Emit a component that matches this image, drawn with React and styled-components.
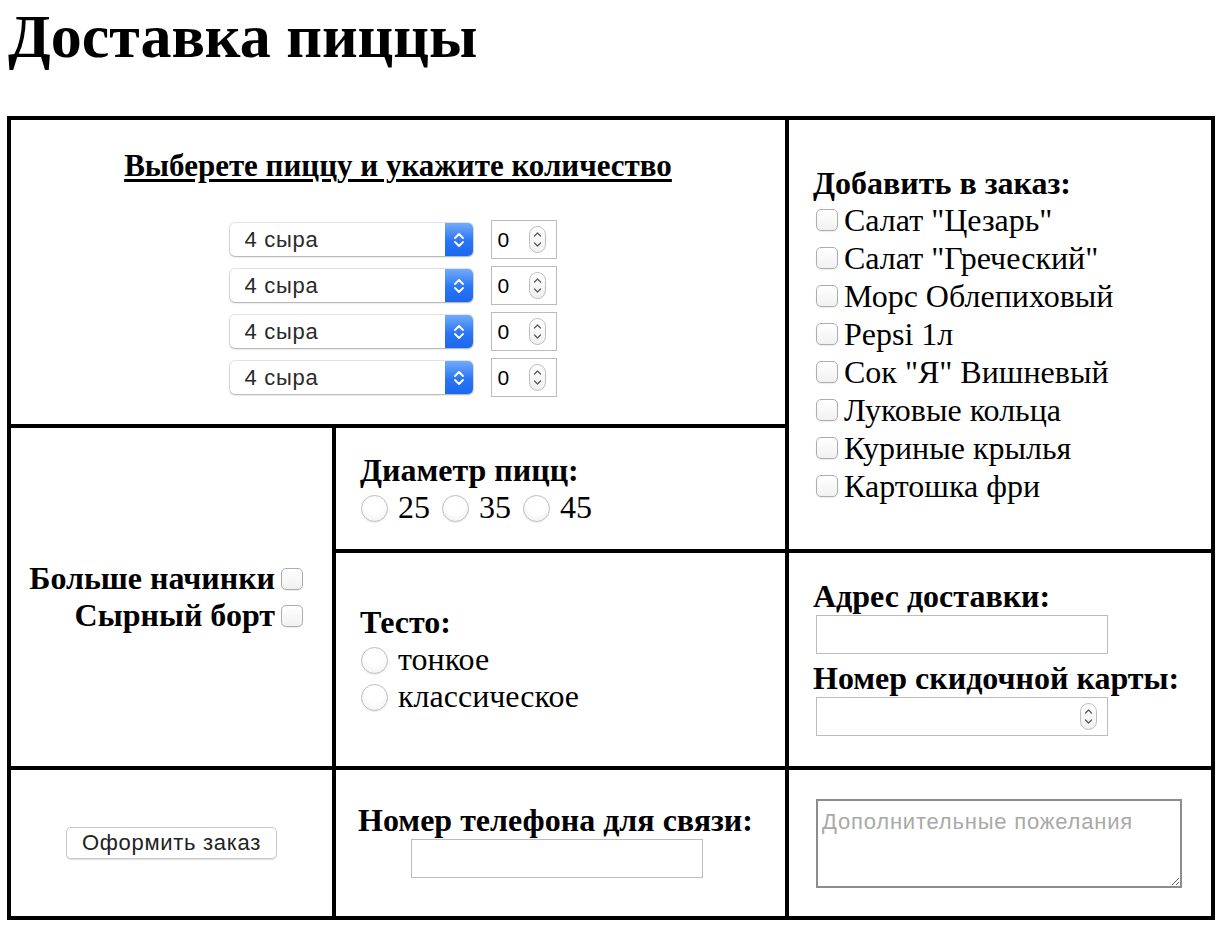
import React from 'react'
import styled, { createGlobalStyle } from 'styled-components'

const GlobalStyle = createGlobalStyle`
  body {
    margin: 0;
    background: #ffffff;
    color: #000000;
    font-family: "Liberation Serif", "Times New Roman", serif;
    font-size: 32px;
  }
`

const Page = styled.div`
  padding: 0 7px;
`

const Title = styled.h1`
  margin: 0 0 43px 1px;
  font-size: 62px;
  font-weight: bold;
  line-height: 73px;
`

const OrderGrid = styled.form`
  display: grid;
  grid-template-columns: 321px 449px 422px;
  grid-template-rows: 304px 121px 213px 146px;
  grid-template-areas:
    'pick pick extras'
    'more size extras'
    'more dough address'
    'submit phone notes';
  gap: 4px;
  padding: 4px;
  width: max-content;
  background: #000000;
`

const Cell = styled.div`
  grid-area: ${({ $area }) => $area};
  display: flex;
  flex-direction: column;
  justify-content: center;
  align-items: ${({ $align }) =>
    $align === 'center' ? 'center' : $align === 'right' ? 'flex-end' : 'flex-start'};
  padding: ${({ $pad }) => $pad || '0 24px'};
  text-align: ${({ $align }) => $align || 'left'};
  background: #ffffff;
`

const Heading = styled.div`
  font-weight: bold;
  line-height: ${({ $lh }) => $lh || '37px'};
  white-space: nowrap;
`

const PickTitle = styled.div`
  font-size: 31px;
  font-weight: bold;
  text-decoration: underline;
  text-underline-offset: 3px;
  line-height: 37px;
  margin-bottom: 36px;
`

const PizzaRows = styled.div`
  display: flex;
  flex-direction: column;
  gap: 7px;
  margin-right: 10px;
`

const PizzaRow = styled.div`
  display: flex;
  align-items: center;
  gap: 18px;
`

const SelectBox = styled.div`
  display: flex;
  width: 243px;
  height: 33px;
  border-radius: 5px;
  overflow: hidden;
  background: #ffffff;
  box-shadow: 0 0 0 1px rgba(0, 0, 0, 0.1), 0 1px 2px rgba(0, 0, 0, 0.25);
`

const Select = styled.select`
  appearance: none;
  flex: 1;
  min-width: 0;
  border: 0;
  outline: none;
  background: transparent;
  padding: 0 0 0 15px;
  font-family: "Liberation Sans", Arial, sans-serif;
  font-size: 22px;
  letter-spacing: 0.7px;
  color: #2a2a2a;
`

const SelectArrows = styled.span`
  display: flex;
  align-items: center;
  justify-content: center;
  width: 28px;
  background: linear-gradient(#72abf9, #2a75f4 55%, #1b68f0);
`

const NumberBox = styled.div`
  display: flex;
  align-items: center;
  box-sizing: border-box;
  width: ${({ $wide }) => ($wide ? '292px' : '66px')};
  height: 39px;
  margin: ${({ $wide }) => ($wide ? '0 0 6px 3px' : '0')};
  padding: 0 10px 0 6px;
  border: 1px solid #bcbcbc;
  background: #ffffff;
`

const NumberInput = styled.input`
  flex: 1;
  min-width: 0;
  border: 0;
  outline: none;
  padding: 0;
  font-family: "Liberation Sans", Arial, sans-serif;
  font-size: 21px;
  color: #000000;
  background: transparent;
  -moz-appearance: textfield;
  &::-webkit-inner-spin-button,
  &::-webkit-outer-spin-button {
    -webkit-appearance: none;
    margin: 0;
  }
`

const TextInput = styled.input`
  box-sizing: border-box;
  width: 292px;
  height: 39px;
  margin: 0 0 6px 3px;
  border: 1px solid #bcbcbc;
  outline: none;
  font-family: "Liberation Sans", Arial, sans-serif;
  font-size: 21px;
`

const Option = styled.label`
  display: flex;
  align-items: center;
  line-height: ${({ $lh }) => $lh || '37px'};
  font-weight: ${({ $bold }) => ($bold ? 'bold' : 'normal')};
  white-space: nowrap;
`

const RadioLine = styled.div`
  display: flex;
  align-items: center;
  line-height: 37px;
`

const Check = styled.input.attrs({ type: 'checkbox' })`
  appearance: none;
  flex: none;
  width: 22px;
  height: 22px;
  margin: ${({ $after }) => ($after ? '0 5px 0 6px' : '0 6px 0 3px')};
  border: 1px solid #adadad;
  border-radius: 5px;
  background: linear-gradient(#ffffff, #f1f1f1);
  box-shadow: 0 1px 1px rgba(0, 0, 0, 0.08);
`

const Radio = styled.input.attrs({ type: 'radio' })`
  appearance: none;
  flex: none;
  width: 27px;
  height: 27px;
  margin: 2px 10px 0 1px;
  border: 1px solid #bdbdbd;
  border-radius: 50%;
  background: radial-gradient(circle at 50% 35%, #ffffff 40%, #eeeeee);
  box-shadow: 0 1px 1px rgba(0, 0, 0, 0.08);
`

const RadioText = styled.span`
  margin-right: 11px;
`

const SubmitButton = styled.button`
  height: 32px;
  padding: 0 15px;
  border: 1px solid #c8c8c8;
  border-radius: 5px;
  background: #ffffff;
  box-shadow: 0 1px 1px rgba(0, 0, 0, 0.12);
  font-family: "Liberation Sans", Arial, sans-serif;
  font-size: 22px;
  letter-spacing: 0.7px;
  color: #222222;
`

const Notes = styled.textarea`
  box-sizing: border-box;
  width: 366px;
  height: 89px;
  margin-left: 3px;
  padding: 8px 4px;
  border: 2px solid #8d8d8d;
  outline: none;
  resize: both;
  font-family: "Liberation Sans", Arial, sans-serif;
  font-size: 22px;
  letter-spacing: 0.8px;
  &::placeholder {
    color: #a9a9a9;
  }
`

function Chevrons() {
  return (
    <svg width="12" height="20" viewBox="0 0 12 20">
      <path d="M2 8 L6 4 L10 8 M2 12 L6 16 L10 12" fill="none" stroke="#ffffff" strokeWidth="1.8" strokeLinecap="round" strokeLinejoin="round" />
    </svg>
  )
}

function Spinner() {
  return (
    <svg width="17" height="27" viewBox="0 0 17 27">
      <defs>
        <linearGradient id="spin" x1="0" y1="0" x2="0" y2="1">
          <stop offset="0" stopColor="#ffffff" />
          <stop offset="1" stopColor="#f0f0f0" />
        </linearGradient>
      </defs>
      <rect x="0.5" y="0.5" width="16" height="26" rx="8" fill="url(#spin)" stroke="#bdbdbd" />
      <path d="M5.5 10 L8.5 7 L11.5 10 M5.5 17 L8.5 20 L11.5 17" fill="none" stroke="#555555" strokeWidth="1.2" strokeLinecap="round" strokeLinejoin="round" />
    </svg>
  )
}

const extras = [
  'Салат "Цезарь"',
  'Салат "Греческий"',
  'Морс Облепиховый',
  'Pepsi 1л',
  'Сок "Я" Вишневый',
  'Луковые кольца',
  'Куриные крылья',
  'Картошка фри',
]

export default function App() {
  return (
    <Page>
      <GlobalStyle />
      <Title>Доставка пиццы</Title>
      <OrderGrid onSubmit={(e) => e.preventDefault()}>
        <Cell $area="pick" $align="center">
          <PickTitle>Выберете пиццу и укажите количество</PickTitle>
          <PizzaRows>
            {[0, 1, 2, 3].map((index) => (
              <PizzaRow key={`pizza-${index}`}>
                <SelectBox>
                  <Select defaultValue="4cheese">
                    <option value="4cheese">4 сыра</option>
                  </Select>
                  <SelectArrows>
                    <Chevrons />
                  </SelectArrows>
                </SelectBox>
                <NumberBox>
                  <NumberInput type="number" defaultValue={0} />
                  <Spinner />
                </NumberBox>
              </PizzaRow>
            ))}
          </PizzaRows>
        </Cell>

        <Cell $area="extras">
          <Heading $lh="36px">Добавить в заказ:</Heading>
          {extras.map((item) => (
            <Option key={item} $lh="38px">
              <Check />
              {item}
            </Option>
          ))}
        </Cell>

        <Cell $area="more" $align="right" $pad="0 24px">
          <Option $bold>
            Больше начинки
            <Check $after />
          </Option>
          <Option $bold>
            Сырный борт
            <Check $after />
          </Option>
        </Cell>

        <Cell $area="size">
          <Heading>Диаметр пицц:</Heading>
          <RadioLine>
            {['25', '35', '45'].map((size) => (
              <React.Fragment key={size}>
                <Radio name="size" />
                <RadioText>{size}</RadioText>
              </React.Fragment>
            ))}
          </RadioLine>
        </Cell>

        <Cell $area="dough">
          <Heading>Тесто:</Heading>
          <Option>
            <Radio name="dough" />
            тонкое
          </Option>
          <Option>
            <Radio name="dough" />
            классическое
          </Option>
        </Cell>

        <Cell $area="address">
          <Heading>Адрес доставки:</Heading>
          <TextInput type="text" />
          <Heading>Номер скидочной карты:</Heading>
          <NumberBox $wide>
            <NumberInput type="number" />
            <Spinner />
          </NumberBox>
        </Cell>

        <Cell $area="submit" $align="center">
          <SubmitButton type="submit">Оформить заказ</SubmitButton>
        </Cell>

        <Cell $area="phone" $align="center" $pad="0 34px 0 24px">
          <Heading>Номер телефона для связи:</Heading>
          <TextInput type="tel" />
        </Cell>

        <Cell $area="notes">
          <Notes placeholder="Дополнительные пожелания" />
        </Cell>
      </OrderGrid>
    </Page>
  )
}
